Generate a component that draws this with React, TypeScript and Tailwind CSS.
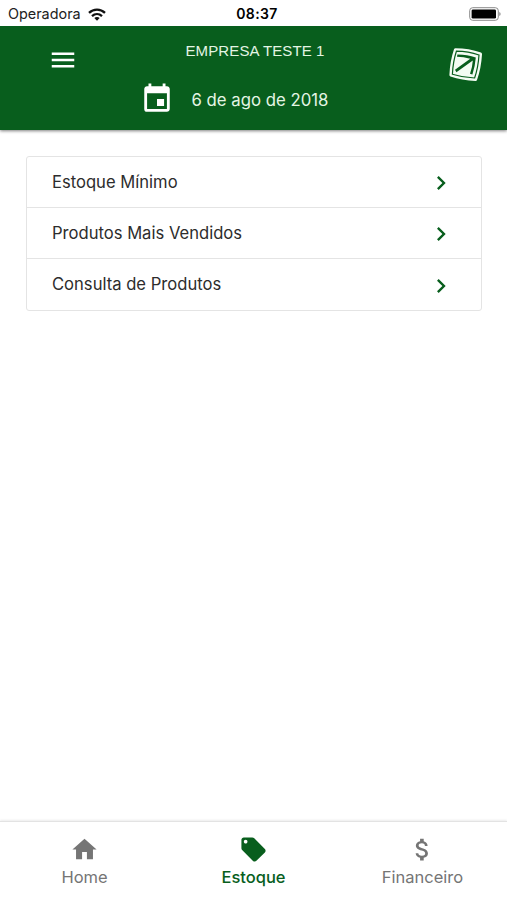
import type { ComponentType } from 'react';
import {
  MdAttachMoney,
  MdChevronRight,
  MdEvent,
  MdHome,
  MdLocalOffer,
  MdMenu,
} from 'react-icons/md';

const REPORTS = ['Estoque Mínimo', 'Produtos Mais Vendidos', 'Consulta de Produtos'];

type Tab = {
  label: string;
  icon: ComponentType<{ className?: string }>;
  active?: boolean;
};

const TABS: Tab[] = [
  { label: 'Home', icon: MdHome },
  { label: 'Estoque', icon: MdLocalOffer, active: true },
  { label: 'Financeiro', icon: MdAttachMoney },
];

function WifiIcon() {
  return (
    <svg viewBox="0 0 18 13" className="w-[18px] h-[13px]" fill="none" stroke="#111" strokeWidth="2.3">
      <path d="M1 4.9C5.5.5 12.5.5 17 4.9" />
      <path d="M4 8.1c2.9-2.7 7.1-2.7 10 0" />
      <path d="M9 12.8 6.3 10.1c1.5-1.4 3.9-1.4 5.4 0z" fill="#111" stroke="none" />
    </svg>
  );
}

function BatteryIcon() {
  return (
    <svg viewBox="0 0 33 14" className="w-[33px] h-[14px]">
      <rect x=".7" y=".7" width="28.6" height="12.6" rx="3" fill="#fff" stroke="#8a8a8a" strokeWidth="1" />
      <rect x="2.6" y="2.4" width="24.4" height="9.2" rx="1.4" fill="#000" />
      <path d="M30.4 5c1.5.5 1.5 3.5 0 4z" fill="#777" />
    </svg>
  );
}

function BrandLogo() {
  return (
    <svg viewBox="0 0 36 36" className="w-9 h-9">
      <path
        d="M8.4 1.2Q22 1.2 34 5.6Q35.2 6.2 35 7.4Q34.2 21 30 33Q29.6 34.2 28.4 34Q15 33.4 3.4 29.6Q2.2 29 2.4 27.8Q3 14 7 2.2Q7.4 1.2 8.4 1.2Z"
        fill="#f3fcf3"
      />
      <path
        d="M9.4 4.2Q21.5 4.4 32 8Q31.2 20.5 27.6 31Q16 30.6 5.4 27.2Q6 14.6 9.4 4.2Z"
        fill="none"
        stroke="#085e1d"
        strokeWidth="1.2"
      />
      <path d="M10.4 7.6Q20.4 7.6 28.8 10.6Q28.2 18.8 25.4 27.4L23 26.8Q25.4 20.4 25.8 13.4L9.4 25.2L8 22.8L23.2 11.8Q16.6 9.8 10 9.8Z" fill="#085e1d" />
    </svg>
  );
}

function StatusBar() {
  return (
    <div className="relative flex h-[26px] items-center justify-between bg-white pl-2 pr-[5px] pt-[2px] text-[#222]">
      <div className="flex items-center gap-[7px]">
        <span className="text-[14.4px] leading-none">Operadora</span>
        <WifiIcon />
      </div>
      <span className="absolute inset-x-0 pl-[7px] text-center text-[14px] leading-none font-semibold tracking-[0.4px] text-black">
        08:37
      </span>
      <BatteryIcon />
    </div>
  );
}

function Header() {
  return (
    <header className="flex h-[104px] justify-between bg-[#085e1d] pl-12 pr-6 text-[#e4f5e4] shadow-[0_1px_3px_rgba(0,0,0,0.5)]">
      <button type="button" aria-label="Menu" className="mt-[19px] h-[30px] w-[30px] text-white">
        <MdMenu className="h-[30px] w-[30px]" />
      </button>
      <div className="flex w-[246px] flex-col">
        <p className="mt-[15px] ml-[46px] h-5 text-[15px] leading-5 tracking-[0.12px] whitespace-nowrap font-['Liberation_Sans',sans-serif]">
          EMPRESA TESTE 1
        </p>
        <div className="mt-[21px] flex items-center gap-[18px]">
          <MdEvent className="h-[34px] w-[34px] text-white" />
          <span className="mt-[2px] text-[16.75px] leading-5 whitespace-nowrap">6 de ago de 2018</span>
        </div>
      </div>
      <div className="mt-[21px]">
        <BrandLogo />
      </div>
    </header>
  );
}

function ReportList() {
  return (
    <ul className="mr-[25px] ml-[26px] mt-[25.5px] divide-y divide-[#e4e4e4] rounded-[3px] border border-[#e4e4e4]">
      {REPORTS.map((report) => (
        <li key={report} className="flex h-[51.2px] items-center justify-between pl-[25px] pr-[26px]">
          <span className="text-[16.6px] leading-6 text-[#2d2d2d]">{report}</span>
          <MdChevronRight className="mt-[3px] h-7 w-7 text-[#085e1d]" />
        </li>
      ))}
    </ul>
  );
}

function TabBar() {
  return (
    <nav className="mt-auto grid h-[79px] grid-cols-3 border-t border-[#e3e3e3] shadow-[0_-1px_2px_rgba(0,0,0,0.08)]">
      {TABS.map(({ label, icon: Icon, active }) => (
        <button
          key={label}
          type="button"
          className={`flex flex-col items-center pt-[13px] ${active ? 'font-medium text-[#085e1d]' : 'text-[#757575]'}`}
        >
          <Icon className="h-[29px] w-[29px]" />
          <span className="mt-px text-[16.5px] leading-6">{label}</span>
        </button>
      ))}
    </nav>
  );
}

export default function App() {
  return (
    <div className="flex h-[900px] w-[507px] flex-col overflow-hidden bg-white font-['Inter',sans-serif]">
      <StatusBar />
      <Header />
      <ReportList />
      <TabBar />
    </div>
  );
}
